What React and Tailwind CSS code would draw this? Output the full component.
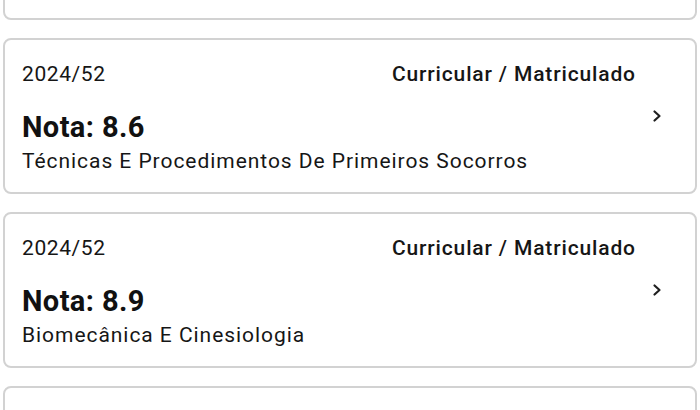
import React from "react";

const disciplinas = [
  { periodo: "2024/52", situacao: "Curricular / Matriculado", nota: "9.1", nome: "Anatomia Aplicada" },
  { periodo: "2024/52", situacao: "Curricular / Matriculado", nota: "8.6", nome: "Técnicas E Procedimentos De Primeiros Socorros" },
  { periodo: "2024/52", situacao: "Curricular / Matriculado", nota: "8.9", nome: "Biomecânica E Cinesiologia" },
  { periodo: "2024/52", situacao: "Curricular / Matriculado", nota: "9.4", nome: "Fisiologia Do Exercício" },
];

function Chevron() {
  return (
    <svg width="12" height="14" viewBox="0 0 12 14" fill="none" className="shrink-0">
      <path d="M3.5 2.5 L8.5 7 L3.5 11.5" stroke="#1f1f1f" strokeWidth="2.2" strokeLinecap="round" strokeLinejoin="round" />
    </svg>
  );
}

function CardDisciplina({ d }) {
  return (
    <div className="h-[156px] shrink-0 rounded-[8px] border-2 border-[#d2d2d2] bg-white flex items-center pl-[17px] pr-[32px]">
      <div className="flex-1 flex flex-col self-stretch pt-[22px] pr-[16px]">
        <div className="flex justify-between items-baseline text-[21px] leading-[24px] text-[#161616]">
          <span className="tracking-[0.6px]">{d.periodo}</span>
          <span className="font-medium tracking-[0.85px] -mr-[0.85px]">{d.situacao}</span>
        </div>
        <div className="mt-[25px] text-[29px] leading-[32px] font-bold tracking-[0.4px] text-[#111]">Nota: {d.nota}</div>
        <div className="mt-[6px] text-[21px] leading-[24px] tracking-[0.95px] text-[#161616]">{d.nome}</div>
      </div>
      <Chevron />
    </div>
  );
}

export default function App() {
  return (
    <div className="w-[700px] h-[410px] overflow-hidden bg-white" style={{ fontFamily: "Roboto, 'Noto Sans', sans-serif" }}>
      <div className="-mt-[136px] flex flex-col gap-[18px] px-[3px]">
        {disciplinas.map((d, i) => (
          <CardDisciplina key={i} d={d} />
        ))}
      </div>
    </div>
  );
}
